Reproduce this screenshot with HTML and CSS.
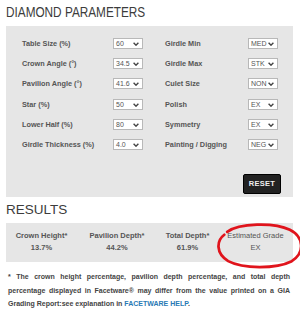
FILE: index.html
```html
<!DOCTYPE html>
<html>
<head>
<meta charset="utf-8">
<link rel="stylesheet" href="styles.css">
</head>
<body>
<div class="page">
  <h1 class="title"><span class="title-text">DIAMOND PARAMETERS</span></h1>
  <div class="panel params">
    <div class="grid">
      <div class="row"><span class="label">Table Size (%)</span><span class="sel">60<svg class="chev" viewBox="0 0 6 4"><path d="M0.6 0.8 L3 3.2 L5.4 0.8" /></svg></span></div>
      <div class="row"><span class="label">Girdle Min</span><span class="sel">MED<svg class="chev" viewBox="0 0 6 4"><path d="M0.6 0.8 L3 3.2 L5.4 0.8" /></svg></span></div>
      <div class="row"><span class="label">Crown Angle (°)</span><span class="sel">34.5<svg class="chev" viewBox="0 0 6 4"><path d="M0.6 0.8 L3 3.2 L5.4 0.8" /></svg></span></div>
      <div class="row"><span class="label">Girdle Max</span><span class="sel">STK<svg class="chev" viewBox="0 0 6 4"><path d="M0.6 0.8 L3 3.2 L5.4 0.8" /></svg></span></div>
      <div class="row"><span class="label">Pavilion Angle (°)</span><span class="sel">41.6<svg class="chev" viewBox="0 0 6 4"><path d="M0.6 0.8 L3 3.2 L5.4 0.8" /></svg></span></div>
      <div class="row"><span class="label">Culet Size</span><span class="sel">NON<svg class="chev" viewBox="0 0 6 4"><path d="M0.6 0.8 L3 3.2 L5.4 0.8" /></svg></span></div>
      <div class="row"><span class="label">Star (%)</span><span class="sel">50<svg class="chev" viewBox="0 0 6 4"><path d="M0.6 0.8 L3 3.2 L5.4 0.8" /></svg></span></div>
      <div class="row"><span class="label">Polish</span><span class="sel">EX<svg class="chev" viewBox="0 0 6 4"><path d="M0.6 0.8 L3 3.2 L5.4 0.8" /></svg></span></div>
      <div class="row"><span class="label">Lower Half (%)</span><span class="sel">80<svg class="chev" viewBox="0 0 6 4"><path d="M0.6 0.8 L3 3.2 L5.4 0.8" /></svg></span></div>
      <div class="row"><span class="label">Symmetry</span><span class="sel">EX<svg class="chev" viewBox="0 0 6 4"><path d="M0.6 0.8 L3 3.2 L5.4 0.8" /></svg></span></div>
      <div class="row"><span class="label">Girdle Thickness (%)</span><span class="sel">4.0<svg class="chev" viewBox="0 0 6 4"><path d="M0.6 0.8 L3 3.2 L5.4 0.8" /></svg></span></div>
      <div class="row"><span class="label">Painting / Digging</span><span class="sel">NEG<svg class="chev" viewBox="0 0 6 4"><path d="M0.6 0.8 L3 3.2 L5.4 0.8" /></svg></span></div>
    </div>
    <div class="actions"><button class="reset">RESET</button></div>
  </div>
  <h2 class="subtitle">RESULTS</h2>
  <div class="panel results">
    <div class="res"><div class="rlabel">Crown Height*</div><div class="rval">13.7%</div></div>
    <div class="res"><div class="rlabel">Pavilion Depth*</div><div class="rval">44.2%</div></div>
    <div class="res"><div class="rlabel">Total Depth*</div><div class="rval">61.9%</div></div>
    <div class="res grade"><div class="rlabel">Estimated Grade</div><div class="rval">EX</div></div>
    <svg class="circle" viewBox="0 0 90 46"><path d="M12 9 C24 0 60 -1 76 7 C90 14 92 30 78 39 C62 47 28 47 13 39 C0 31 1 18 9 12" /></svg>
  </div>
  <p class="note">* The crown height percentage, pavilion depth percentage, and total depth percentage displayed in Facetware® may differ from the value printed on a GIA Grading Report:see explanation in <a class="link">FACETWARE HELP</a>.</p>
</div>
</body>
</html>
```
FILE: styles.css
```css
* { box-sizing: border-box; }
html, body { margin: 0; padding: 0; background: #fff; }
body { font-family: "Liberation Sans", Arial, sans-serif; color: #444; width: 300px; height: 312px; overflow: hidden; }
.page { padding: 0 7px 0 6px; }
.title { margin: 0; padding-top: 3px; height: 26px; font-size: 15.5px; font-weight: normal; color: #3c3c3c; line-height: 18px; white-space: nowrap; }
.title-text { display: inline-block; transform: scaleX(0.76); transform-origin: left center; }
.panel { background: #e6e6e6; }
.params { padding: 11px 15px 4px 16px; height: 171px; }
.grid { display: grid; grid-template-columns: 121px 113px; column-gap: 22px; row-gap: 8.4px; }
.row { display: flex; justify-content: space-between; align-items: center; height: 12px; }
.label { font-size: 7.3px; font-weight: bold; color: #555; }
.sel { position: relative; width: 30px; height: 11px; background: #fff; border: 1px solid #b8b8b8; font-size: 7px; line-height: 9px; padding-left: 2px; color: #555; }
.chev { position: absolute; right: 3px; top: 3px; width: 6px; height: 4px; fill: none; stroke: #444; stroke-width: 1.4; }
.actions { display: flex; justify-content: flex-end; margin-top: 23px; margin-right: -3px; }
.reset { width: 38px; height: 20px; background: #222; color: #eee; border: 1px solid #000; border-radius: 2px; font-family: "Liberation Sans", Arial, sans-serif; font-weight: bold; font-size: 7.5px; padding: 0; letter-spacing: 0.3px; }
.subtitle { margin: 0; padding-top: 5px; height: 26px; font-size: 13.5px; font-weight: normal; color: #3c3c3c; line-height: 16px; }
.results { position: relative; display: grid; grid-template-columns: 71px 80px 61px 75px; height: 39px; padding-top: 8px; }
.res { text-align: center; white-space: nowrap; }
.rlabel { font-size: 7.5px; font-weight: bold; color: #555; line-height: 9px; }
.rval { font-size: 7.5px; font-weight: bold; color: #555; line-height: 9px; margin-top: 3px; }
.grade .rlabel, .grade .rval { font-weight: normal; }
.circle { position: absolute; left: 208px; top: 0; width: 91px; height: 45px; overflow: visible; fill: none; stroke: #e0141c; stroke-width: 2.8; stroke-linecap: round; }
.note { margin: 8px 3px 0 2px; font-size: 7px; font-weight: bold; line-height: 13.5px; text-align: justify; color: #444; }
.link { color: #2a7ab5; text-decoration: none; }
```
